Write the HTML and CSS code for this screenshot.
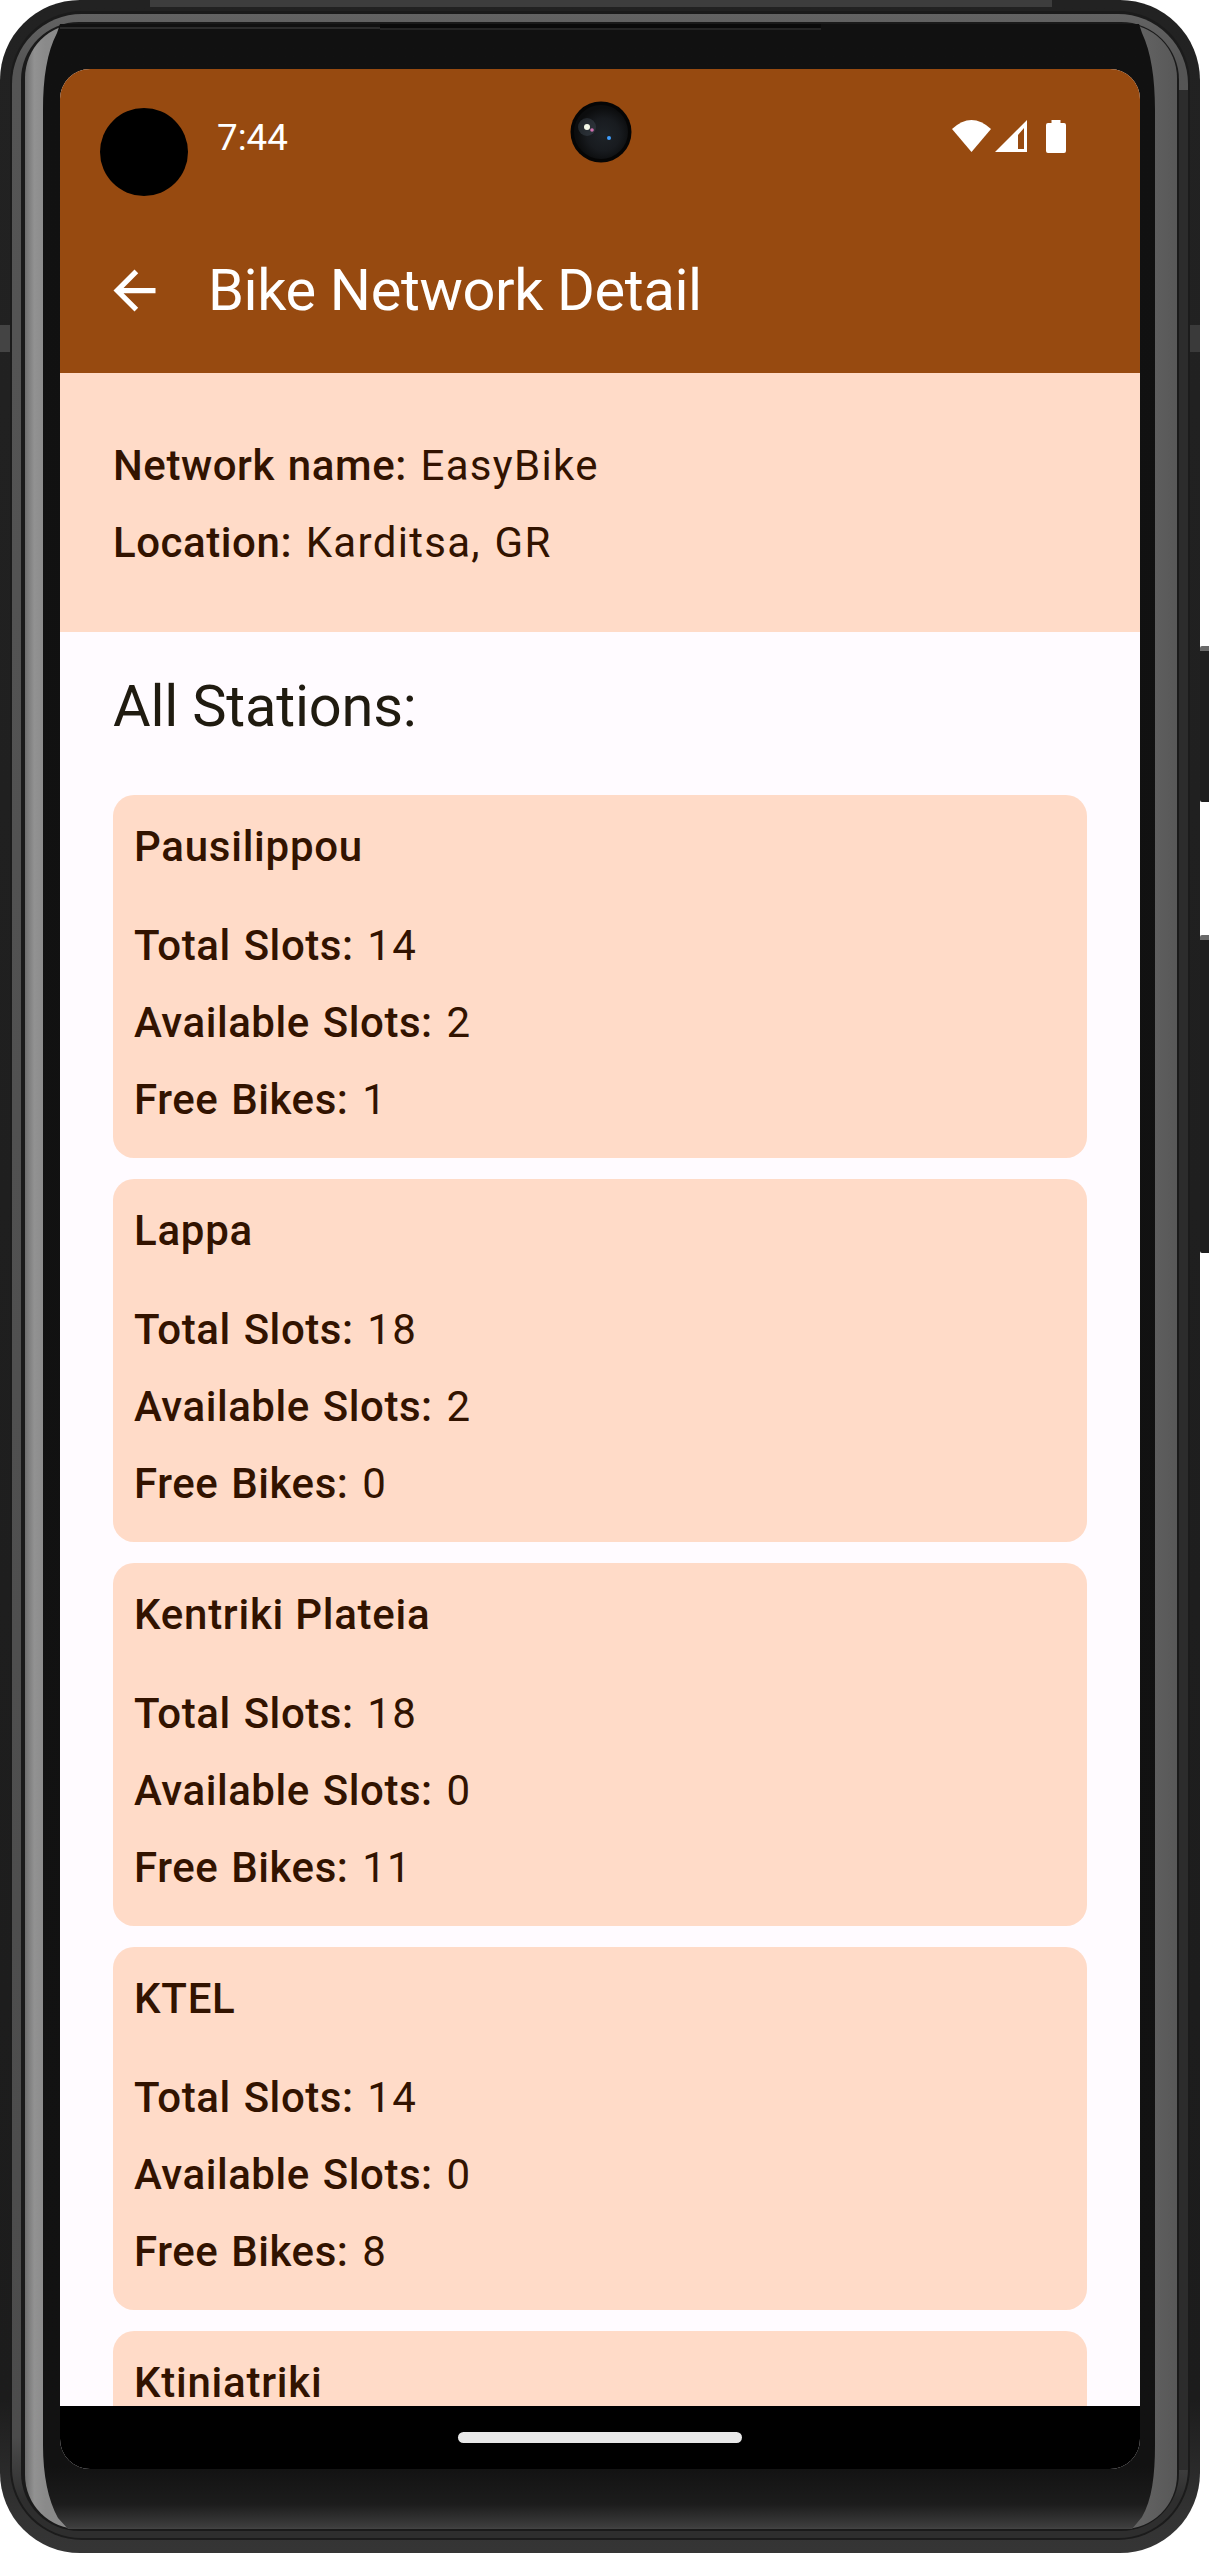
FILE: index.html
```html
<!DOCTYPE html>
<html lang="en">
<head>
<meta charset="utf-8">
<title>Bike Network Detail</title>
<link rel="stylesheet" href="styles.css">
</head>
<body>
<div class="device">
  <svg class="frame" width="1209" height="2553" viewBox="0 0 1209 2553" aria-hidden="true">
    <defs>
      <linearGradient id="body" x1="0" y1="0" x2="0" y2="1">
        <stop offset="0" stop-color="#222222"/>
        <stop offset="0.94" stop-color="#1c1c1c"/>
        <stop offset="0.985" stop-color="#333333"/>
        <stop offset="1" stop-color="#353535"/>
      </linearGradient>
      <linearGradient id="ring" x1="0" y1="0" x2="0" y2="1">
        <stop offset="0" stop-color="#636363"/>
        <stop offset="0.02" stop-color="#555555"/>
        <stop offset="0.96" stop-color="#4c4c4c"/>
        <stop offset="0.985" stop-color="#2e2e2e"/>
        <stop offset="1" stop-color="#2e2e2e"/>
      </linearGradient>
      <linearGradient id="band" x1="0" y1="0" x2="1" y2="0">
        <stop offset="0" stop-color="#6e6e6e"/>
        <stop offset="0.008" stop-color="#929292"/>
        <stop offset="0.018" stop-color="#8a8a8a"/>
        <stop offset="0.5" stop-color="#777777"/>
        <stop offset="0.97" stop-color="#626262"/>
        <stop offset="1" stop-color="#585858"/>
      </linearGradient>
      <linearGradient id="bezel" x1="0" y1="0" x2="0" y2="1">
        <stop offset="0" stop-color="#111111"/>
        <stop offset="0.975" stop-color="#121212"/>
        <stop offset="0.99" stop-color="#1c1c1c"/>
        <stop offset="0.999" stop-color="#3c3c3c"/>
        <stop offset="1" stop-color="#444444"/>
      </linearGradient>
    </defs>
    <rect x="0" y="0" width="1200" height="2553" rx="80" fill="url(#body)"/>
    <rect x="150" y="0" width="902" height="7" fill="#3d3d3d"/>
    <rect x="0" y="325" width="12" height="27" fill="#444444"/>
    <rect x="1188" y="325" width="12" height="27" fill="#3a3a3a"/>
    <rect x="10" y="11" width="1180" height="2529" rx="72" fill="#1b1b1b"/>
    <rect x="12" y="14" width="1176" height="2524" rx="70" fill="url(#ring)"/>
    <rect x="1177" y="90" width="11" height="2380" fill="#2c2c2c"/>
    <rect x="21" y="22" width="1158" height="2509" rx="58" fill="#1a1a1a"/>
    <rect x="25" y="24" width="1152" height="2505" rx="54" fill="url(#band)"/>
    <path d="M60 24H1139L1142 33C1151 52 1155 78 1155 110V2445C1155 2475 1152 2500 1142 2517L1132 2529H68L58 2518C48 2500 43 2475 43 2445V110C43 78 47 52 57 33Z" fill="url(#bezel)"/>
    <rect x="380" y="24" width="441" height="4" fill="#0a0a0a"/>
    <rect x="60" y="27" width="320" height="2" fill="#2c2c2c"/>
    <rect x="380" y="28" width="441" height="2" fill="#242424"/>
  </svg>

  <div class="side-button power"></div>
  <div class="side-button volume"></div>

  <main class="screen">
    <header class="top">
      <div class="status">
        <span class="time">7:44</span>
        <div class="status-icons">
          <svg class="ic-wifi" width="40" height="32" viewBox="0 0 40 32"><path d="M0 9Q19.5-9 39 9L19.5 32Z" fill="#fff"/></svg>
          <svg class="ic-signal" width="32" height="32" viewBox="0 0 32 32"><path fill-rule="evenodd" d="M0 32L32 0V32ZM23 15V29H29V8Z" fill="#fff"/></svg>
          <svg class="ic-battery" width="20" height="33" viewBox="0 0 20 33"><path d="M5.500 0H14.500V3H18A2 2 0 0 1 20 5V31A2 2 0 0 1 18 33H2A2 2 0 0 1 0 31V5A2 2 0 0 1 2 3H5.500Z" fill="#fff"/></svg>
        </div>
      </div>
      <div class="appbar">
        <svg class="ic-back" width="63" height="63" viewBox="0 0 24 24"><path d="M20 11H7.830l5.590-5.590L12 4l-8 8 8 8 1.410-1.410L7.830 13H20v-2z" fill="#fff"/></svg>
        <h1 class="title">Bike Network Detail</h1>
      </div>
      <div class="punch"></div>
      <svg class="camera" width="62" height="62" viewBox="0 0 62 62">
        <defs>
          <radialGradient id="lens" cx="0.55" cy="0.55" r="0.5">
            <stop offset="0" stop-color="#1e2328"/>
            <stop offset="0.6" stop-color="#181b1f"/>
            <stop offset="1" stop-color="#0c0d0e"/>
          </radialGradient>
        </defs>
        <circle cx="31" cy="31" r="30.500" fill="#050505"/>
        <circle cx="31" cy="31" r="27" fill="url(#lens)"/>
        <circle cx="17" cy="26" r="9" fill="#4a5560" opacity="0.35"/>
        <circle cx="17" cy="26" r="3" fill="#f4f8e8"/>
        <circle cx="22" cy="29" r="1.800" fill="#d070b0"/>
        <circle cx="39" cy="37" r="2" fill="#3f9fff"/>
      </svg>
    </header>

    <section class="summary">
      <p class="line"><strong>Network name:</strong> EasyBike</p>
      <p class="line"><strong>Location:</strong> Karditsa, GR</p>
    </section>

    <section class="stations">
      <h2 class="stations-heading">All Stations:</h2>
      <div class="card-list">
        <article class="card">
          <h3 class="card-title">Pausilippou</h3>
          <p class="line"><strong>Total Slots:</strong> 14</p>
          <p class="line"><strong>Available Slots:</strong> 2</p>
          <p class="line"><strong>Free Bikes:</strong> 1</p>
        </article>
        <article class="card">
          <h3 class="card-title">Lappa</h3>
          <p class="line"><strong>Total Slots:</strong> 18</p>
          <p class="line"><strong>Available Slots:</strong> 2</p>
          <p class="line"><strong>Free Bikes:</strong> 0</p>
        </article>
        <article class="card">
          <h3 class="card-title">Kentriki Plateia</h3>
          <p class="line"><strong>Total Slots:</strong> 18</p>
          <p class="line"><strong>Available Slots:</strong> 0</p>
          <p class="line"><strong>Free Bikes:</strong> 11</p>
        </article>
        <article class="card">
          <h3 class="card-title">KTEL</h3>
          <p class="line"><strong>Total Slots:</strong> 14</p>
          <p class="line"><strong>Available Slots:</strong> 0</p>
          <p class="line"><strong>Free Bikes:</strong> 8</p>
        </article>
        <article class="card">
          <h3 class="card-title">Ktiniatriki</h3>
        </article>
      </div>
    </section>

    <nav class="navbar"><span class="home-pill"></span></nav>
  </main>
</div>
</body>
</html>
```
FILE: styles.css
```css
* {
  box-sizing: border-box;
}

html,
body {
  margin: 0;
  background: #ffffff;
}

body {
  font-family: Roboto, "Liberation Sans", sans-serif;
}

.device {
  position: relative;
  width: 1209px;
  height: 2553px;
  padding: 69px 69px 84px 60px;
  overflow: hidden;
}

.frame {
  position: absolute;
  left: 0;
  top: 0;
  display: block;
}

.side-button {
  position: absolute;
  left: 1200px;
  width: 9px;
  background: #1e1e1e;
  border-top: 5px solid #6a6a6a;
  border-radius: 2px 0 0 2px;
}

.power {
  top: 646px;
  height: 156px;
}

.volume {
  top: 935px;
  height: 318px;
}

.screen {
  position: relative;
  display: flex;
  flex-direction: column;
  width: 1080px;
  height: 2400px;
  border-radius: 30px;
  overflow: hidden;
  background: #fffbff;
}

.top {
  position: relative;
  flex: none;
  height: 304px;
  background: #974a10;
  color: #ffffff;
}

.status {
  display: flex;
  align-items: center;
  justify-content: space-between;
  height: 138px;
  padding: 0 74px 0 157px;
}

.time {
  font-size: 36.75px;
  line-height: 44px;
}

.status-icons {
  display: flex;
  align-items: center;
  margin-top: -4px;
}

.status-icons svg {
  display: block;
}

.ic-wifi {
  margin-right: 3px;
}

.ic-signal {
  margin-right: 19px;
}

.appbar {
  display: flex;
  align-items: center;
  height: 166px;
  padding-left: 43px;
}

.ic-back {
  flex: none;
}

.title {
  margin: 0 0 0 42px;
  font-size: 57.750px;
  font-weight: 400;
  line-height: 76px;
  letter-spacing: -0.370px;
}

.punch {
  position: absolute;
  left: 40px;
  top: 39px;
  width: 88px;
  height: 88px;
  border-radius: 50%;
  background: #000000;
}

.camera {
  position: absolute;
  left: 510px;
  top: 32px;
}

.summary {
  flex: none;
  height: 259px;
  padding: 54px 53px 51px;
  background: #ffdbc8;
  color: #321300;
}

.line {
  margin: 0;
  font-size: 42px;
  font-weight: 400;
  line-height: 77px;
  letter-spacing: 1.300px;
  word-spacing: 2px;
}

.line strong {
  font-weight: 500;
  letter-spacing: 0.550px;
}

.stations {
  flex: 1;
  min-height: 0;
  padding: 0 53px;
  overflow: hidden;
}

.stations-heading {
  margin: 0;
  padding: 24px 0 39px;
  font-size: 57.750px;
  font-weight: 400;
  line-height: 100px;
  letter-spacing: -0.200px;
  color: #201b10;
}

.card-list {
  display: flex;
  flex-direction: column;
  gap: 21px;
}

.card {
  flex: none;
  padding: 21px 21px 20px;
  border-radius: 21px;
  background: #ffdbc8;
  color: #321300;
}

.card-title {
  margin: 0 0 29px;
  font-size: 42px;
  font-weight: 500;
  line-height: 62px;
  letter-spacing: 0.750px;
}

.navbar {
  display: flex;
  flex: none;
  align-items: center;
  justify-content: center;
  height: 63px;
  background: #000000;
}

.home-pill {
  display: block;
  width: 284px;
  height: 11px;
  border-radius: 6px;
  background: #e8e8e8;
}
```
